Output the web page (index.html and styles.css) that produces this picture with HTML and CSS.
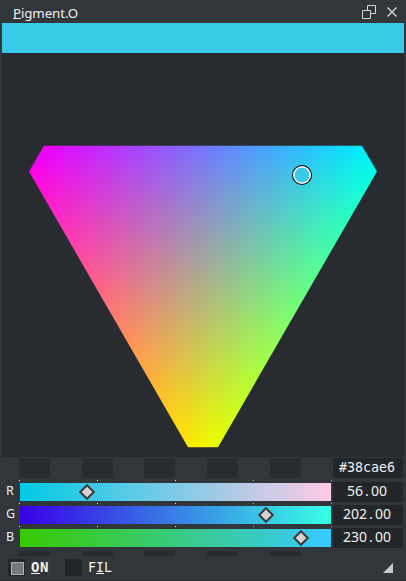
FILE: index.html
```
<!DOCTYPE html>
<html lang="en">
<head>
<meta charset="utf-8">
<title>Pigment.O</title>
<link rel="stylesheet" href="styles.css">
</head>
<body>
<main class="docker">
  <header class="titlebar">
    <h1 class="title"><u>P</u>igment.O</h1>
    <svg class="window-icons" width="44" height="23" viewBox="360 0 44 23">
      <path class="line" d="M367.500 10V5.500H375.500V13.500H371M362.500 10.500H370.500V18.500H362.500Z"/>
      <path class="cross" d="M387.500 7.500L396.500 16.500M396.500 7.500L387.500 16.500"/>
    </svg>
  </header>
  <div class="current-color"></div>
  <svg class="panel" width="402" height="404" viewBox="2 53 402 404">
    <defs>
      <linearGradient id="r" gradientUnits="userSpaceOnUse" x1="29" y1="171.500" x2="290.300" y2="21"><stop stop-color="#f00"/><stop offset="1" stop-color="#000"/></linearGradient>
      <linearGradient id="g" gradientUnits="userSpaceOnUse" x1="377" y1="171.500" x2="115.700" y2="21"><stop stop-color="#0f0"/><stop offset="1" stop-color="#000"/></linearGradient>
      <linearGradient id="b" gradientUnits="userSpaceOnUse" x1="0" y1="146" x2="0" y2="447"><stop stop-color="#00f"/><stop offset="1" stop-color="#000"/></linearGradient>
      <clipPath id="gamut"><path d="M44 145.700H362L377 171.500L218 447.300H188L29 171.500Z"/></clipPath>
    </defs>
    <g class="mix" clip-path="url(#gamut)">
      <rect x="29" y="145" width="348" height="303" fill="url(#r)"/>
      <rect class="screen" x="29" y="145" width="348" height="303" fill="url(#g)"/>
      <rect class="screen" x="29" y="145" width="348" height="303" fill="url(#b)"/>
    </g>
    <circle cx="302" cy="175" r="10" fill="#000"/>
    <circle cx="302" cy="175" r="9" fill="#fff"/>
    <circle cx="302" cy="175" r="7.500" fill="#38cae6"/>
  </svg>
  <section class="top-row">
    <div class="swatches"><i></i><i></i><i></i><i></i><i></i></div>
    <div class="field hex">#38cae6</div>
  </section>
  <section class="channel">
    <span class="label">R</span>
    <div class="track"><div class="ticks"><i></i><i></i><i></i><i></i><i></i></div><div class="ramp red"></div>
      <svg class="handle at-r" width="18" height="18"><path d="M9 2.200L15.800 9L9 15.800L2.200 9Z"/></svg></div>
    <div class="field">56<b>.</b>00</div>
  </section>
  <section class="channel">
    <span class="label">G</span>
    <div class="track"><div class="ticks"><i></i><i></i><i></i><i></i><i></i></div><div class="ramp green"></div>
      <svg class="handle at-g" width="18" height="18"><path d="M9 2.200L15.800 9L9 15.800L2.200 9Z"/></svg></div>
    <div class="field">202<b>.</b>00</div>
  </section>
  <section class="channel">
    <span class="label">B</span>
    <div class="track"><div class="ticks"><i></i><i></i><i></i><i></i><i></i></div><div class="ramp blue"></div>
      <svg class="handle at-b" width="18" height="18"><path d="M9 2.200L15.800 9L9 15.800L2.200 9Z"/></svg></div>
    <div class="field">230<b>.</b>00</div>
  </section>
  <div class="swatches short"><i></i><i></i><i></i><i></i><i></i></div>
  <footer class="options">
    <span class="check checked"></span><span class="name on"><u>O</u>N</span>
    <span class="check"></span><span class="name">F<u>I</u>L</span>
    <svg class="grip" width="10" height="10"><path d="M10 0V10H0Z"/></svg>
  </footer>
</main>
</body>
</html>
```
FILE: styles.css
```
* { box-sizing: border-box; }
body { margin: 0; background: #31363b; color: #eff0f1; font: 14px/20px "Noto Sans", sans-serif; }
.docker { width: 406px; height: 581px; padding: 0 2px; overflow: hidden; border-bottom: 1px solid #292d31; display: flex; flex-direction: column; }
u { text-decoration: none; box-shadow: 0 1px 0 #eff0f1; }
.titlebar { height: 23px; flex: none; display: flex; justify-content: space-between; }
.title { margin: 3px 0 0 11px; font: 13.300px/20px "Noto Sans", sans-serif; letter-spacing: -0.100px; }
.title u { display: inline-block; height: 15px; line-height: 20px; vertical-align: top; }
.window-icons { flex: none; }
.line { fill: none; stroke: #d5d6d7; }
.cross { fill: none; stroke: #d5d6d7; stroke-width: 1.400; }
.current-color { height: 30px; flex: none; background: #38cae6; }
.panel { display: block; flex: none; background: #282c30; }
.mix { isolation: isolate; }
.screen { mix-blend-mode: screen; }
.top-row { display: flex; justify-content: space-between; height: 22px; padding: 1px 1px 0 17px; flex: none; }
.swatches { display: flex; justify-content: space-between; width: 282px; height: 20px; }
.swatches i { width: 31px; height: 100%; background: #282c30; }
.swatches i:nth-child(3) { margin-left: -1px; margin-right: 1px; }
.short { height: 5px; margin: 3px 0 0 17px; flex: none; }
.field { width: 70px; height: 20px; padding-right: 2px; background: #232629; text-align: center; line-height: 18px; }
.hex { font-family: "DejaVu Sans Mono", monospace; font-size: 13.300px; line-height: 20px; }
.field b { display: inline-block; width: 8px; text-align: center; font-weight: 400; }
.channel { display: flex; height: 23px; padding: 3px 1px 0 0; flex: none; }
.label { width: 17px; padding-left: 4px; font-size: 12.500px; line-height: 18px; }
.track { position: relative; width: 313px; margin: -2px 1px 0 0; }
.ticks { display: flex; justify-content: space-between; height: 1px; }
.ticks i { width: 1px; background: #eff0f1; }
.ticks i:nth-child(4), .ticks i:nth-child(5) { background: #a6a9ab; }
.ramp { height: 18px; margin: 2px 1px 0; }
.red { background: linear-gradient(90deg, #00cae6, #ffcae6); }
.green { background: linear-gradient(90deg, #3800e6, #38ffe6); }
.blue { background: linear-gradient(90deg, #38ca00, #38caff); }
.handle { position: absolute; top: 3px; }
.handle path { fill: #d4d4d4; stroke: #3b3b3b; stroke-width: 2; }
.at-r { left: 59px; }
.at-g { left: 238px; }
.at-b { left: 273px; }
.options { display: flex; padding: 3px 11px 0 6px; }
.check { width: 17px; height: 17px; background: #232629; }
.checked { padding: 3px; }
.checked::before { content: ""; display: block; width: 11px; height: 11px; background: #757779; border: 1px solid #b0b1b2; }
.name { display: flex; height: 17px; margin-left: 6px; font: 13.300px/17px "DejaVu Sans Mono", monospace; }
.name u { height: 14px; }
.on { width: 34px; font-weight: 700; font-size: 14px; letter-spacing: 0.600px; }
.grip { margin: 4px 0 0 auto; fill: #c8c9ca; }
```
